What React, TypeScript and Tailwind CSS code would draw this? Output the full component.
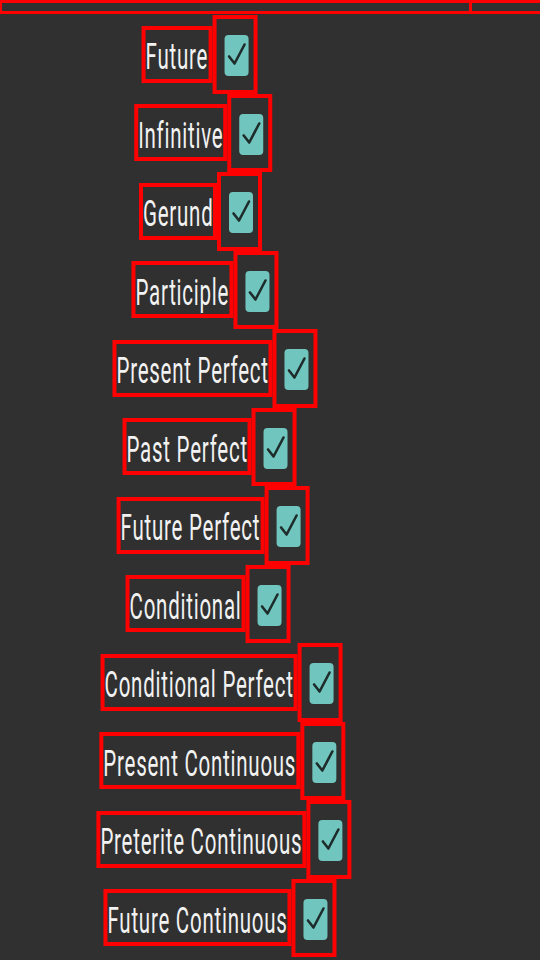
import React from "react";

const TENSES = [
  "Future",
  "Infinitive",
  "Gerund",
  "Participle",
  "Present Perfect",
  "Past Perfect",
  "Future Perfect",
  "Conditional",
  "Conditional Perfect",
  "Present Continuous",
  "Preterite Continuous",
  "Future Continuous",
];

function CheckBox() {
  return (
    <div className="h-[41px] w-[24px] rounded-[4px] bg-[#70c6be]">
      <svg viewBox="0 0 24 41" preserveAspectRatio="none" className="h-full w-full">
        <path d="M4.5 21.5 L10 28.5 L20 9.5" fill="none" stroke="#1f2c2c" strokeWidth="2.6" strokeLinecap="round" strokeLinejoin="round" />
      </svg>
    </div>
  );
}

function TenseRow({ label }: { label: string }) {
  return (
    <div className="flex h-[78.5px] w-fit -translate-x-[32.4%] items-center">
      <div className="flex h-[57px] items-center border-4 border-[#ff0000] pt-[6px]">
        <span className="inline-block scale-y-[1.76] whitespace-nowrap text-[20.5px] leading-none tracking-[0.75px] text-[#f2f2f2]">
          {label}
        </span>
      </div>
      <div className="flex w-[45px] items-center self-stretch border-4 border-[#ff0000] pl-[8px] pt-[3px]">
        <CheckBox />
      </div>
    </div>
  );
}

export default function App() {
  return (
    <div
      className="h-[960px] w-[540px] overflow-hidden bg-[#303030]"
      style={{ fontFamily: "Roboto, 'Noto Sans', sans-serif" }}
    >
      {/* Header strip */}
      <div className="flex h-[14px] border-y-[3px] border-l-[2px] border-[#ff0000]">
        <div className="w-[470px] border-r-[3px] border-[#ff0000]" />
        <div className="flex-1" />
      </div>

      {/* Tense list */}
      <div className="flex flex-col items-start pl-[179px] pt-[1px]">
        {TENSES.map((t) => (
          <TenseRow key={t} label={t} />
        ))}
      </div>
    </div>
  );
}
